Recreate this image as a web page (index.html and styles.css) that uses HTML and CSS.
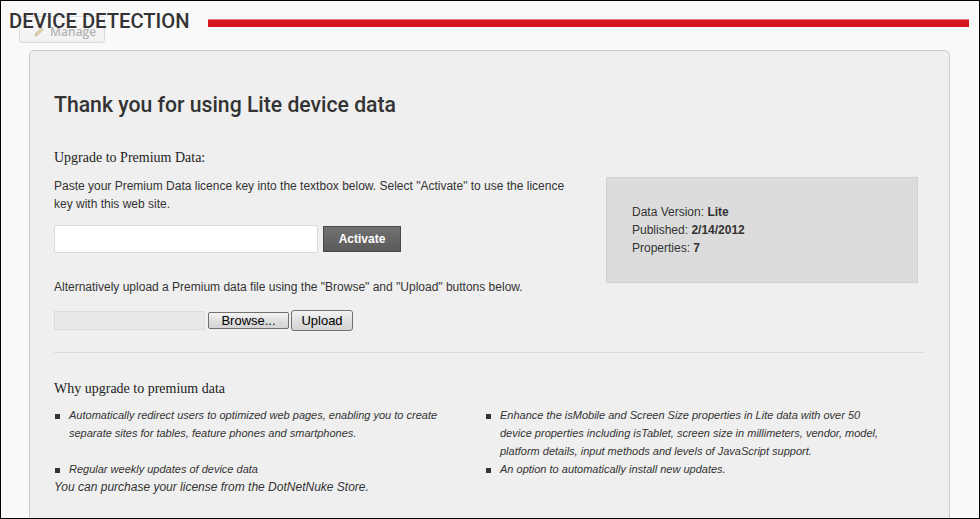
FILE: index.html
```html
<!DOCTYPE html>
<html>
<head>
<meta charset="utf-8">
<title>Device Detection</title>
<link rel="stylesheet" href="styles.css">
</head>
<body>
<div class="page">
  <div class="manage-btn">
    <svg class="pencil" width="12" height="12" viewBox="0 0 12 12" aria-hidden="true">
      <path d="M2 10 L2.6 7.6 L8.4 1.8 L10.2 3.6 L4.4 9.4 Z" fill="#e8d9a8" stroke="#b9b09a" stroke-width="0.8"/>
      <path d="M2 10 L2.6 7.6 L4.4 9.4 Z" fill="#c9c0b0"/>
    </svg>
    <span>Manage</span>
  </div>
  <header class="header">
    <h1 class="title">DEVICE DETECTION</h1>
    <div class="redbar"></div>
  </header>

  <section class="panel">
    <h2 class="heading">Thank you for using Lite device data</h2>

    <div class="upgrade">
      <div class="upgrade-main">
        <div class="sub">Upgrade to Premium Data:</div>
        <p class="text">Paste your Premium Data licence key into the textbox below. Select "Activate" to use the licence key with this web site.</p>
        <div class="key-row">
          <input class="key-input" type="text">
          <button class="btn-activate" type="button">Activate</button>
        </div>
        <p class="text alt">Alternatively upload a Premium data file using the "Browse" and "Upload" buttons below.</p>
        <div class="file-row">
          <div class="file-box"></div>
          <button class="btn-classic btn-browse" type="button">Browse...</button>
          <button class="btn-classic btn-upload" type="button">Upload</button>
        </div>
      </div>
      <div class="info-box">
        <div>Data Version: <b>Lite</b></div>
        <div>Published: <b>2/14/2012</b></div>
        <div>Properties: <b>7</b></div>
      </div>
    </div>

    <hr class="divider">

    <div class="sub why">Why upgrade to premium data</div>
    <ul class="benefits">
      <li class="left">Automatically redirect users to optimized web pages, enabling you to create separate sites for tables, feature phones and smartphones.</li>
      <li class="right">Enhance the isMobile and Screen Size properties in Lite data with over 50 device properties including isTablet, screen size in millimeters, vendor, model, platform details, input methods and levels of JavaScript support.</li>
      <li class="left">Regular weekly updates of device data</li>
      <li class="right">An option to automatically install new updates.</li>
    </ul>
    <div class="purchase">You can purchase your license from the DotNetNuke Store.</div>
  </section>
</div>
</body>
</html>
```
FILE: styles.css
```css
html, body {
  margin: 0;
  padding: 0;
}

.page {
  position: relative;
  width: 980px;
  height: 519px;
  box-sizing: border-box;
  border: 1px solid #000;
  overflow: hidden;
  background: #f9f9f9;
  font-family: "Liberation Sans", Arial, sans-serif;
  color: #333;
}

/* Manage button sitting behind the title */
.manage-btn {
  position: absolute;
  left: 18px;
  top: 15px;
  width: 86px;
  height: 27px;
  box-sizing: border-box;
  border: 1px solid #dcdcdc;
  border-radius: 3px;
  background: linear-gradient(#fafafa, #f1f1f1);
  display: flex;
  align-items: center;
  padding: 4px 0 0 13px;
  gap: 5px;
  font-family: "Open Sans", sans-serif;
  font-size: 12px;
  font-weight: 600;
  color: #b4b4b4;
  z-index: 0;
}

.pencil {
  flex: none;
}

.header {
  position: relative;
  z-index: 1;
  display: flex;
  padding: 6px 10px 0 8px;
  height: 28px;
}

.title {
  margin: 0;
  font-family: Roboto, "Open Sans", sans-serif;
  font-size: 20.2px;
  font-weight: 500;
  line-height: 28px;
  color: #333;
  white-space: nowrap;
}

.redbar {
  flex: 1;
  margin: 12px 0 0 18px;
  height: 7px;
  border-top: 1px solid #e57a7e;
  background: #d5191f;
}

/* Main panel */
.panel {
  margin: 15px 0 0 28px;
  width: 921px;
  height: 520px;
  box-sizing: border-box;
  border: 1px solid #cbcbcb;
  border-radius: 5px;
  background: #efefef;
  padding: 39px 25px 0 24px;
}

.heading {
  margin: 0;
  font-family: Roboto, "Open Sans", sans-serif;
  font-size: 21.2px;
  font-weight: 500;
  line-height: 30px;
  color: #333;
}

.upgrade {
  margin-top: 29px;
  display: grid;
  grid-template-columns: 525px 312px;
  column-gap: 27px;
  align-items: start;
}

.sub {
  font-family: "Liberation Serif", "Times New Roman", serif;
  font-size: 14px;
  line-height: 18px;
  color: #222;
}

.text {
  margin: 10px 0 0;
  font-size: 12px;
  line-height: 18px;
  color: #333;
}

.key-row {
  margin-top: 12px;
  display: flex;
  align-items: center;
  gap: 5px;
}

.key-input {
  width: 264px;
  height: 28px;
  box-sizing: border-box;
  margin: 0;
  border: 1px solid #dadada;
  border-radius: 2px;
  background: #fff;
}

.btn-activate {
  width: 78px;
  height: 26px;
  margin: 0;
  padding: 0;
  border: 1px solid #4a4a4a;
  background: linear-gradient(#727272, #5a5a5a);
  color: #fff;
  font-family: "Liberation Sans", Arial, sans-serif;
  font-size: 12px;
  font-weight: bold;
}

.text.alt {
  margin-top: 25px;
}

.file-row {
  margin-top: 14px;
  display: flex;
  align-items: center;
  height: 21px;
}

.file-box {
  width: 151px;
  height: 19px;
  box-sizing: border-box;
  border: 1px solid #dcdcdc;
  background: #e9e9e9;
}

.btn-classic {
  margin: 0;
  padding: 0;
  box-sizing: border-box;
  border: 1px solid #707070;
  border-radius: 3px;
  background: linear-gradient(#f4f4f4, #e0e0e0 50%, #d4d4d4);
  color: #000;
  font-family: "Liberation Sans", Arial, sans-serif;
  font-size: 13px;
}

.btn-browse {
  width: 81px;
  height: 17px;
  margin-left: 3px;
  border-radius: 2px;
  line-height: 15px;
}

.btn-upload {
  width: 62px;
  height: 21px;
  margin-left: 2px;
}

.info-box {
  margin-top: 28px;
  box-sizing: border-box;
  height: 106px;
  border: 1px solid #d2d2d2;
  background: #dcdcdc;
  padding: 25px 25px;
  font-size: 12px;
  line-height: 18px;
  color: #333;
}

.divider {
  margin: 21px 0 0;
  border: 0;
  height: 1px;
  background: #dadada;
}

.sub.why {
  margin-top: 27px;
}

.benefits {
  margin: 8px 0 0;
  padding: 0;
  list-style: none;
  display: grid;
  grid-template-columns: 431px 400px;
  font-size: 11px;
  font-style: italic;
  line-height: 18px;
  color: #333;
}

.benefits li {
  display: flex;
  align-items: flex-start;
}

.benefits li::before {
  content: "";
  flex: none;
  width: 5px;
  height: 5px;
  margin: 8px 9px 0 1px;
  background: #333;
}

.benefits li.left {
  padding-right: 20px;
}

.purchase {
  font-size: 12px;
  font-style: italic;
  line-height: 18px;
  color: #333;
}
```
